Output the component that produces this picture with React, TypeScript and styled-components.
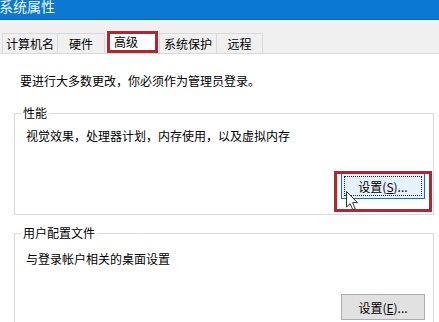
import React from 'react';
import styled, { createGlobalStyle, css } from 'styled-components';

const GlobalStyle = createGlobalStyle`
  html, body {
    margin: 0;
    padding: 0;
    background: #ffffff;
  }
  body {
    font-family: "Noto Sans CJK SC", "Microsoft YaHei", sans-serif;
  }
`;

const Window = styled.div`
  width: 439px;
  height: 322px;
  overflow: hidden;
  display: flex;
  flex-direction: column;
  background: #f0f0f0;
`;

const TitleBar = styled.div`
  flex-shrink: 0;
  height: 19px;
  background: #0b79d4;
  border-bottom: 1px solid #1766a8;
  overflow: hidden;
`;

const Title = styled.div`
  margin: -2px 0 0 -1px;
  color: #f4f9fd;
  font-size: 14px;
  line-height: 16px;
`;

const TabStrip = styled.div`
  flex-shrink: 0;
  display: flex;
  align-items: flex-end;
  height: 22px;
  margin-top: 11px;
  padding-left: 2px;
`;

const Tab = styled.div<{ $w: number; $active?: boolean }>`
  box-sizing: border-box;
  width: ${({ $w }) => $w}px;
  height: 20px;
  margin-left: -1px;
  display: flex;
  align-items: center;
  justify-content: center;
  font-size: 12px;
  color: #000;
  background: #f0f0f0;
  border: 1px solid #d9d9d9;
  border-bottom: none;
  &:first-child {
    margin-left: 0;
  }
  ${({ $active }) =>
    $active &&
    css`
      height: 22px;
      margin: 0 2px 0 2px;
      justify-content: flex-start;
      padding: 0 0 1px 4px;
      background: #ffffff;
      border: 3px solid #b3262d;
      position: relative;
      z-index: 1;
    `}
`;

const Panel = styled.div`
  flex: 1 0 auto;
  background: #ffffff;
  border-top: 1px solid #d9d9d9;
  padding: 19px 5px 0 14px;
`;

const Notice = styled.div`
  font-size: 12px;
  line-height: 16px;
  color: #000;
  padding-left: 6px;
`;

const Group = styled.div<{ $gap: number }>`
  margin-top: ${({ $gap }) => $gap}px;
  border: 1px solid #dcdcdc;
  padding-bottom: 15px;
`;

const Legend = styled.div`
  width: fit-content;
  margin: -8px 0 0 6px;
  padding: 0 2px;
  background: #ffffff;
  font-size: 12px;
  line-height: 14px;
  color: #000;
`;

const Desc = styled.div<{ $gap: number }>`
  margin-top: ${({ $gap }) => $gap}px;
  padding-left: 11px;
  font-size: 12px;
  line-height: 16px;
  color: #000;
`;

const ButtonRow = styled.div<{ $gap: number }>`
  margin-top: ${({ $gap }) => $gap}px;
  display: flex;
  justify-content: flex-end;
  padding-right: 8px;
`;

const ButtonWrap = styled.div`
  position: relative;
`;

const Button = styled.div<{ $focused?: boolean }>`
  box-sizing: border-box;
  width: 84px;
  height: 26px;
  display: flex;
  align-items: center;
  justify-content: center;
  font-size: 12px;
  color: #000;
  background: #e1e1e1;
  border: 1px solid #adadad;
  position: relative;
  ${({ $focused }) =>
    $focused &&
    css`
      background: #e5f1fb;
      border-color: #0078d7;
      &::after {
        content: '';
        position: absolute;
        inset: 2px;
        border: 1px dotted #222;
      }
    `}
`;

const Key = styled.span`
  text-decoration: underline;
`;

const Highlight = styled.div`
  position: absolute;
  left: -7px;
  right: -7px;
  top: -2px;
  bottom: -13px;
  border: 3px solid #b3262d;
  pointer-events: none;
`;

const Cursor = styled.svg`
  position: absolute;
  left: 5px;
  top: 18px;
  z-index: 2;
`;

const tabs = [
  { label: '计算机名', w: 56 },
  { label: '硬件', w: 48 },
  { label: '高级', w: 51, active: true },
  { label: '系统保护', w: 58 },
  { label: '远程', w: 47 },
];

export default function App() {
  return (
    <>
      <GlobalStyle />
      <Window>
        <TitleBar>
          <Title>系统属性</Title>
        </TitleBar>
        <TabStrip>
          {tabs.map((t) => (
            <Tab key={t.label} $w={t.w} $active={t.active}>
              {t.label}
            </Tab>
          ))}
        </TabStrip>
        <Panel>
          <Notice>要进行大多数更改，你必须作为管理员登录。</Notice>
          <Group $gap={24}>
            <Legend>性能</Legend>
            <Desc $gap={8}>视觉效果，处理器计划，内存使用，以及虚拟内存</Desc>
            <ButtonRow $gap={29}>
              <ButtonWrap>
                <Button $focused>
                  设置(<Key>S</Key>)...
                </Button>
                <Highlight />
                <Cursor width="13" height="20" viewBox="0 0 13 20">
                  <path
                    d="M0.5 0.5 L0.5 16 L4.2 12.6 L6.8 18.8 L9.2 17.8 L6.6 11.6 L11.5 11.6 Z"
                    fill="#ffffff"
                    stroke="#333"
                    strokeWidth="1"
                    strokeLinejoin="round"
                  />
                </Cursor>
              </ButtonWrap>
            </ButtonRow>
          </Group>
          <Group $gap={18}>
            <Legend>用户配置文件</Legend>
            <Desc $gap={11}>与登录帐户相关的桌面设置</Desc>
            <ButtonRow $gap={27}>
              <Button>
                设置(<Key>E</Key>)...
              </Button>
            </ButtonRow>
          </Group>
        </Panel>
      </Window>
    </>
  );
}
